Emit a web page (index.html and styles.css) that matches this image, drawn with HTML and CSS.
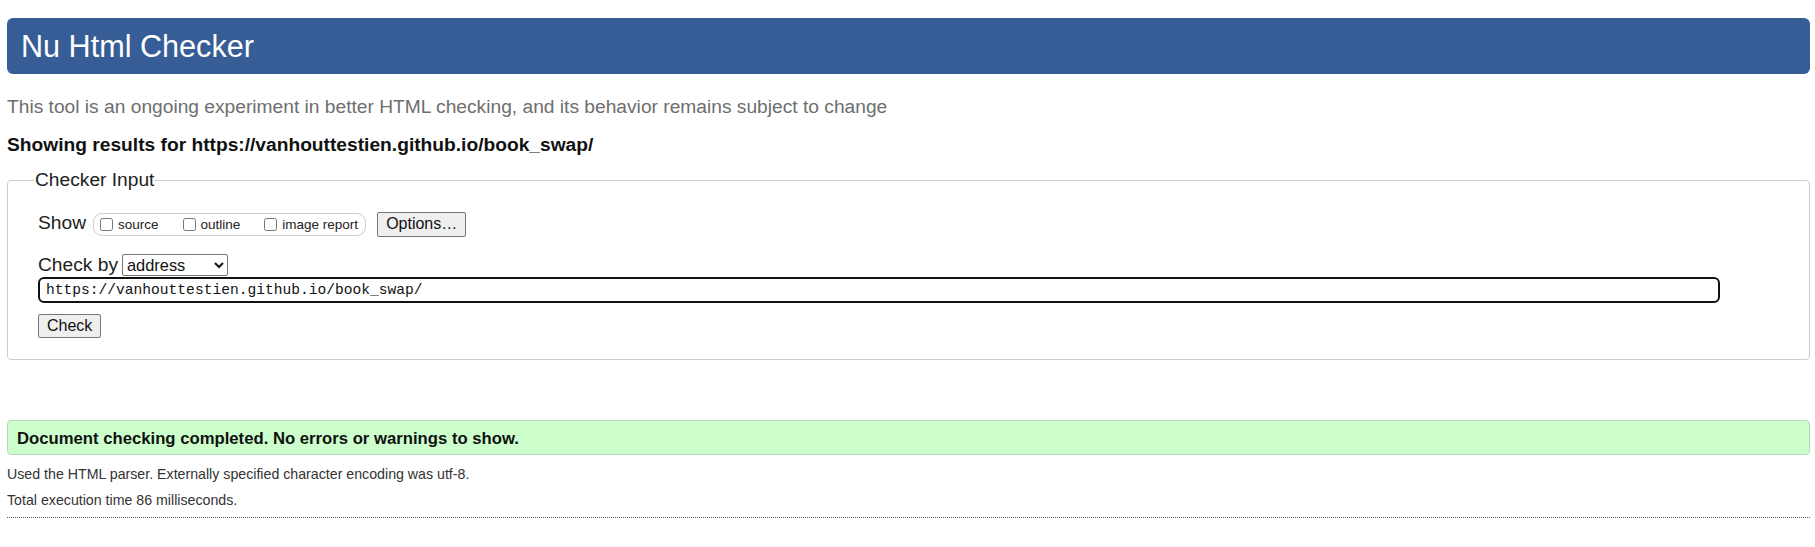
FILE: index.html
```html
<!DOCTYPE html>
<html lang="en">
<head>
<meta charset="utf-8">
<title>Showing results for https://vanhouttestien.github.io/book_swap/ - Nu Html Checker</title>
<link rel="stylesheet" href="styles.css">
</head>
<body>
<h1 class="title">Nu Html Checker</h1>
<p class="lede">This tool is an ongoing experiment in better HTML checking, and its behavior remains subject to change</p>
<h2 class="showing">Showing results for https://vanhouttestien.github.io/book_swap/</h2>
<form class="form">
  <fieldset class="inputbox">
    <legend class="legend">Checker Input</legend>
    <div class="row show-row">
      <span class="label">Show</span>
      <span class="opts">
        <label class="opt"><input type="checkbox" class="cb"><span>source</span></label>
        <label class="opt"><input type="checkbox" class="cb"><span>outline</span></label>
        <label class="opt"><input type="checkbox" class="cb"><span>image report</span></label>
      </span>
      <button type="button" class="btn options">Options…</button>
    </div>
    <div class="row by-row">
      <span class="label">Check by</span>
      <select class="sel"><option>address</option></select>
    </div>
    <div class="url-row">
      <input class="url" type="text" value="https://vanhouttestien.github.io/book_swap/">
    </div>
    <div class="check-row">
      <button type="button" class="btn check">Check</button>
    </div>
  </fieldset>
</form>
<p class="success">Document checking completed. No errors or warnings to show.</p>
<p class="details">Used the HTML parser. Externally specified character encoding was utf-8.</p>
<p class="details">Total execution time 86 milliseconds.</p>
<div class="footer"></div>
</body>
</html>
```

FILE: styles.css
```css
html, body {
  background: #ffffff;
}

body {
  margin: 0 5px 0 7px;
  font-family: "Liberation Sans", Arial, sans-serif;
  color: #111111;
}

.title {
  margin: 18px 0 0;
  height: 56px;
  line-height: 56px;
  padding: 0 14px;
  background: #365d95;
  color: #ffffff;
  font-size: 30.6px;
  font-weight: normal;
  border-radius: 6px;
}

.lede {
  margin: 22px 0 0;
  font-size: 19.2px;
  line-height: 22px;
  color: #6e6e6e;
}

.showing {
  margin: 16px 0 0;
  font-size: 19.2px;
  line-height: 22px;
  font-weight: bold;
  color: #111111;
}

.form {
  margin: 13px 0 0;
}

.inputbox {
  margin: 0;
  padding: 0 30px 21px 30px;
  border: 1px solid #cccccc;
  border-radius: 4px;
}

.legend {
  margin-left: -4px;
  padding: 0 1px;
  font-size: 19.2px;
  line-height: 22px;
  color: #222222;
}

.row {
  display: flex;
  align-items: center;
}

.label {
  font-size: 19.2px;
  color: #222222;
}

.show-row {
  margin-top: 20px;
  height: 26px;
}

.show-row .label {
  margin-bottom: 3px;
}

.opts {
  display: inline-flex;
  align-items: center;
  gap: 24px;
  margin-left: 7px;
  height: 23px;
  padding: 0 7px 0 6px;
  border: 1px solid #cccccc;
  border-radius: 9px;
  box-sizing: border-box;
}

.opt {
  display: inline-flex;
  align-items: center;
  gap: 5px;
  font-size: 13.5px;
  color: #222222;
}

.cb {
  margin: 0;
  width: 13px;
  height: 13px;
}

.btn {
  font-family: "Liberation Sans", Arial, sans-serif;
  font-size: 16px;
  color: #111111;
  background: #efefef;
  border: 1px solid #767676;
  border-radius: 2px;
  padding: 0 8px;
  height: 25px;
}

.options {
  margin-left: 11px;
}

.by-row {
  margin-top: 16px;
  height: 23px;
}

.sel {
  margin-left: 4px;
  width: 106px;
  height: 22px;
  font-family: "Liberation Sans", Arial, sans-serif;
  font-size: 16.4px;
  color: #111111;
  background: #ffffff;
  border: 1px solid #767676;
  border-radius: 2px;
}

.url-row {
  margin-top: 1px;
  padding-right: 59px;
}

.url {
  display: block;
  box-sizing: border-box;
  width: 100%;
  height: 26px;
  padding: 0 6px;
  border: 2px solid #111111;
  border-radius: 6px;
  font-family: "Liberation Mono", "DejaVu Sans Mono", monospace;
  font-size: 14.6px;
  color: #111111;
  outline: none;
}

.check-row {
  margin-top: 11px;
}

.check {
  height: 24px;
}

.success {
  margin: 60px 0 0;
  padding: 0 9px;
  height: 35px;
  line-height: 35px;
  box-sizing: border-box;
  background: #ccffcc;
  border: 1px solid #b8d8b8;
  border-radius: 4px;
  font-size: 16.7px;
  font-weight: bold;
  color: #111111;
}

.details {
  margin: 10px 0 0;
  font-size: 14.2px;
  line-height: 18px;
  color: #333333;
}

.details + .details {
  margin-top: 8px;
}

.footer {
  margin-top: 8px;
  border-top: 1px dotted #555555;
}
```
